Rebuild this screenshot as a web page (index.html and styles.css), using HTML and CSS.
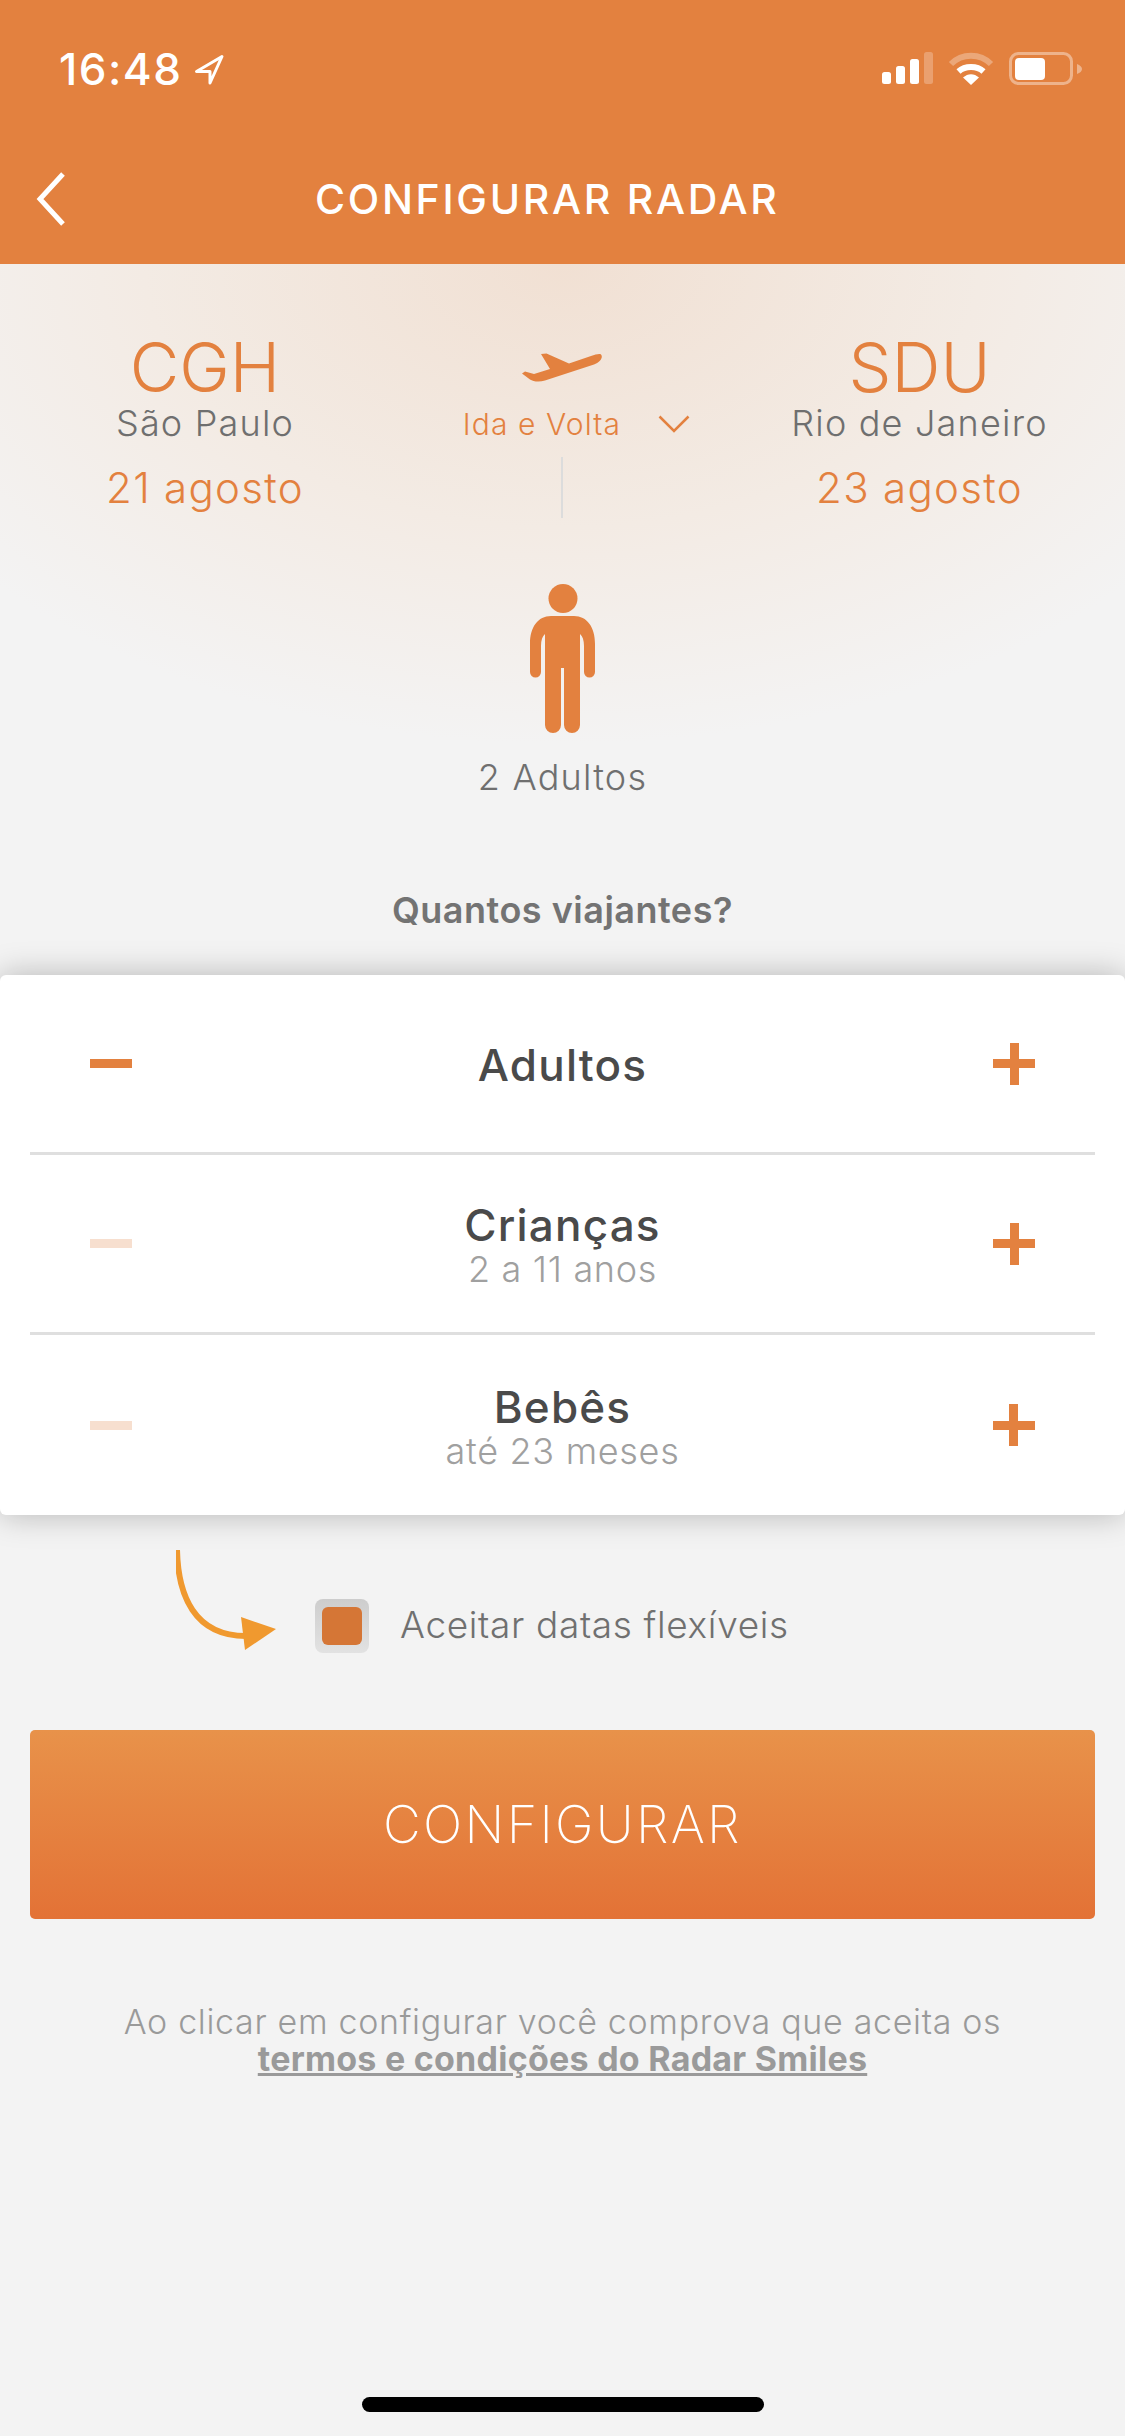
FILE: index.html
```html
<!DOCTYPE html>
<html lang="pt-BR">

<head>
    <meta charset="UTF-8">
    <meta name="viewport" content="width=device-width, initial-scale=1.0">
    <title>Configurar Radar</title>
    <link rel="stylesheet" href="styles.css">
</head>

<body>
    <div class="phone">
        <header class="top">
            <div class="status">
                <div class="clock">
                    <span class="time">16:48</span>
                    <svg class="locate" width="30" height="31" viewBox="0 0 30 31">
                        <path d="M28 2.500L2.500 17.500H16V29Z" fill="none" stroke="#fff" stroke-width="3" stroke-linejoin="round"/>
                    </svg>
                </div>
                <div class="status-icons">
                    <svg width="51" height="32" viewBox="0 0 51 32" fill="#fff">
                        <rect x="0" y="20" width="9" height="12" rx="2.500"/>
                        <rect x="14" y="14" width="9" height="18" rx="2.500"/>
                        <rect x="28" y="7" width="9" height="25" rx="2.500"/>
                        <rect x="42" y="0" width="9" height="32" rx="2.500" opacity=".25"/>
                    </svg>
                    <svg width="46" height="33" viewBox="0 0 46 33" fill="none" stroke="#fff" stroke-width="6">
                        <path d="M3 12C14 1 32 1 43 12" opacity=".3"/>
                        <path d="M10.500 19.500C17 13.500 29 13.500 35.500 19.500"/>
                        <path d="M15 25.500L23 33L31 25.500C26 21 20 21 15 25.500Z" fill="#fff" stroke="none"/>
                    </svg>
                    <svg width="73" height="33" viewBox="0 0 73 33" fill="#fff">
                        <rect x="1.500" y="1.500" width="61" height="30" rx="8" fill="none" stroke="#fff" stroke-width="3" opacity=".4"/>
                        <rect x="6" y="6" width="30" height="22" rx="4"/>
                        <path d="M68 12C71 13 73 15 73 17C73 19 71 21 68 22Z" opacity=".4"/>
                    </svg>
                </div>
            </div>
            <div class="nav">
                <svg class="back" width="30" height="54" viewBox="0 0 30 54">
                    <path d="M27 2L4 27L27 52" fill="none" stroke="#fff" stroke-width="5"/>
                </svg>
                <h1>CONFIGURAR RADAR</h1>
            </div>
        </header>

        <section class="summary">
            <div class="route">
                <div class="place">
                    <div class="code">CGH</div>
                    <div class="city">São Paulo</div>
                    <div class="date">21 agosto</div>
                </div>
                <div class="trip">
                    <svg class="plane" width="80" height="29" viewBox="0 0 80 29">
                        <path d="M79 1.500C81.500 4.500 78 9 72 11.500L23 27.500C17 29.500 11 28.500 8 26.500L0 20.500L3 18.500L12 21L28 16L19 1L24.500 0.500L47 10.500L69 3C73.500 1.500 77.500 0.500 79 1.500Z" fill="#e3813f"/>
                    </svg>
                    <div class="trip-type">
                        <span>Ida e Volta</span>
                        <svg width="32" height="18" viewBox="0 0 32 18">
                            <path d="M1.500 1.500L16 16L30.500 1.500" fill="none" stroke="#e3813f" stroke-width="2.500"/>
                        </svg>
                    </div>
                    <div class="divider"></div>
                </div>
                <div class="place">
                    <div class="code">SDU</div>
                    <div class="city">Rio de Janeiro</div>
                    <div class="date">23 agosto</div>
                </div>
            </div>

            <svg class="person" width="65" height="150" viewBox="0 0 65 150">
                <circle cx="33" cy="14.500" r="14.500" fill="#e3813f"/>
                <path d="M21 32H44C57 32 65 43 65 60V88a5.500 5.500 0 0 1-11 0V62C54 56 52.500 52 50 50V141a8 8 0 0 1-16 0V84H31V141a8 8 0 0 1-16 0V50C12.500 52 11 56 11 62V88a5.500 5.500 0 0 1-11 0V60C0 43 8 32 21 32Z" fill="#e3813f"/>
            </svg>
            <div class="people">2 Adultos</div>
            <h2>Quantos viajantes?</h2>
        </section>

        <section class="card">
            <div class="row">
                <div class="minus"></div>
                <div class="row-text">
                    <div class="row-title">Adultos</div>
                </div>
                <div class="plus"></div>
            </div>
            <div class="row">
                <div class="minus off"></div>
                <div class="row-text">
                    <div class="row-title">Crianças</div>
                    <div class="row-sub">2 a 11 anos</div>
                </div>
                <div class="plus"></div>
            </div>
            <div class="row">
                <div class="minus off"></div>
                <div class="row-text">
                    <div class="row-title">Bebês</div>
                    <div class="row-sub">até 23 meses</div>
                </div>
                <div class="plus"></div>
            </div>
        </section>

        <div class="flex-dates">
            <svg class="hint" width="100" height="102" viewBox="0 0 100 102">
                <path d="M1 0C2 45 18 86 70 86" fill="none" stroke="#f0992f" stroke-width="6"/>
                <path d="M65 67L100 79L69 100Z" fill="#f0992f"/>
            </svg>
            <div class="check"><div class="check-fill"></div></div>
            <span>Aceitar datas flexíveis</span>
        </div>

        <button class="configure">CONFIGURAR</button>

        <p class="terms">
            Ao clicar em configurar você comprova que aceita os<br>
            <a href="#">termos e condições do Radar Smiles</a>
        </p>

        <div class="home-bar"></div>
    </div>
</body>

</html>
```
FILE: styles.css
```css
* {
    box-sizing: border-box;
}

body {
    margin: 0;
    font-family: Inter, "Open Sans", sans-serif;
    background: #f3f3f3;
}

.phone {
    width: 1125px;
    height: 2436px;
    overflow: hidden;
    display: flex;
    flex-direction: column;
    background: #f3f3f3;
}

.top {
    height: 264px;
    flex-shrink: 0;
    background: #e3813f;
    color: white;
}

.status {
    height: 150px;
    padding: 52px 43px 0 59px;
    display: flex;
    justify-content: space-between;
    align-items: flex-start;
}

.clock {
    display: flex;
    align-items: center;
    gap: 12px;
}

.time {
    font-size: 44px;
    line-height: 34px;
    font-weight: 500;
    letter-spacing: 1.500px;
}

.status-icons {
    display: flex;
    align-items: flex-start;
    gap: 15px;
}

.nav {
    display: flex;
    align-items: center;
    padding-left: 36px;
    height: 98px;
}

.nav .back {
    flex-shrink: 0;
}

.nav h1 {
    margin: 0 0 0 249px;
    font-size: 41px;
    line-height: 50px;
    font-weight: 500;
    letter-spacing: 2.700px;
    white-space: nowrap;
}

.summary {
    height: 711px;
    flex-shrink: 0;
    padding-top: 70px;
    display: flex;
    flex-direction: column;
    align-items: center;
    background: radial-gradient(ellipse 760px 480px at 562px 0, #f1e0d3 0%, #f3ebe4 55%, #f3f3f3 100%);
}

.route {
    width: 100%;
    display: grid;
    grid-template-columns: 410px 304px 411px;
}

.place {
    text-align: center;
}

.code {
    font-size: 68px;
    line-height: 66px;
    font-weight: 300;
    color: #e3813f;
}

.city {
    margin-top: 1px;
    font-size: 36px;
    line-height: 44px;
    font-weight: 300;
    letter-spacing: 1.200px;
    color: #6f6f6f;
}

.date {
    margin-top: 18px;
    font-size: 42px;
    line-height: 50px;
    font-weight: 300;
    letter-spacing: 1.300px;
    color: #e3813f;
}

.trip {
    display: flex;
    flex-direction: column;
    align-items: center;
    padding-top: 19px;
}

.plane {
    display: block;
}

.trip-type {
    margin-top: 24px;
    padding-left: 29px;
    display: flex;
    align-items: center;
    gap: 37px;
    font-size: 30px;
    line-height: 36px;
    font-weight: 300;
    letter-spacing: 1.100px;
    color: #e3813f;
    white-space: nowrap;
}

.divider {
    margin-top: 15px;
    width: 2px;
    height: 61px;
    background: #dcdcdc;
}

.person {
    margin-top: 66px;
    display: block;
    flex-shrink: 0;
}

.people {
    margin-top: 21px;
    font-size: 36px;
    line-height: 44px;
    font-weight: 300;
    letter-spacing: 1.200px;
    color: #6f6f6f;
}

.summary h2 {
    margin: 89px 0 0;
    font-size: 36px;
    line-height: 44px;
    font-weight: 600;
    letter-spacing: 0.500px;
    color: #737373;
}

.card {
    height: 540px;
    flex-shrink: 0;
    background: white;
    border-radius: 6px;
    padding: 0 30px;
    box-shadow: 0 0 32px rgba(0, 0, 0, 0.26);
}

.row {
    height: 180px;
    display: flex;
    align-items: center;
    justify-content: space-between;
    padding: 0 60px;
    border-bottom: 3px solid #dfdfdf;
}

.row:last-child {
    border-bottom: none;
}

.minus {
    width: 42px;
    height: 9px;
    background: #e3813f;
}

.minus.off {
    background: #f7dfcf;
}

.plus {
    width: 42px;
    height: 42px;
    background:
        linear-gradient(#e3813f, #e3813f) center / 42px 9px no-repeat,
        linear-gradient(#e3813f, #e3813f) center / 9px 42px no-repeat;
}

.row-text {
    padding-top: 4px;
    text-align: center;
}

.row-title {
    font-size: 44px;
    line-height: 47px;
    font-weight: 500;
    letter-spacing: 1.200px;
    color: #4a4a4a;
}

.row-sub {
    font-size: 36px;
    line-height: 40px;
    font-weight: 300;
    letter-spacing: 0.700px;
    color: #a0a0a0;
}

.flex-dates {
    position: relative;
    height: 215px;
    flex-shrink: 0;
    padding: 84px 0 0 315px;
    display: flex;
    align-items: flex-start;
    gap: 31px;
    font-size: 37px;
    line-height: 52px;
    font-weight: 300;
    letter-spacing: 0.650px;
    color: #707070;
}

.hint {
    position: absolute;
    left: 176px;
    top: 35px;
}

.check {
    width: 54px;
    height: 54px;
    padding: 8px 7px;
    border-radius: 8px;
    background: linear-gradient(to bottom, #cdcdcd, #e2e2e2);
}

.check-fill {
    width: 40px;
    height: 38px;
    border-radius: 6px;
    background: #d57636;
}

.configure {
    display: block;
    margin: 0 30px;
    width: 1065px;
    height: 189px;
    flex-shrink: 0;
    border: none;
    border-radius: 5px;
    background: linear-gradient(to bottom, #e8924a, #e37236);
    color: white;
    font-family: inherit;
    font-size: 52px;
    font-weight: 200;
    letter-spacing: 2.300px;
}

.terms {
    margin: 84px 0 0;
    text-align: center;
    font-size: 34px;
    line-height: 37px;
    font-weight: 300;
    letter-spacing: 0.670px;
    color: #9a9a9a;
}

.terms a {
    color: #9a9a9a;
    font-weight: 700;
    letter-spacing: 0.250px;
}

.home-bar {
    width: 402px;
    height: 15px;
    margin: auto auto 24px;
    border-radius: 8px;
    background: black;
}
```
